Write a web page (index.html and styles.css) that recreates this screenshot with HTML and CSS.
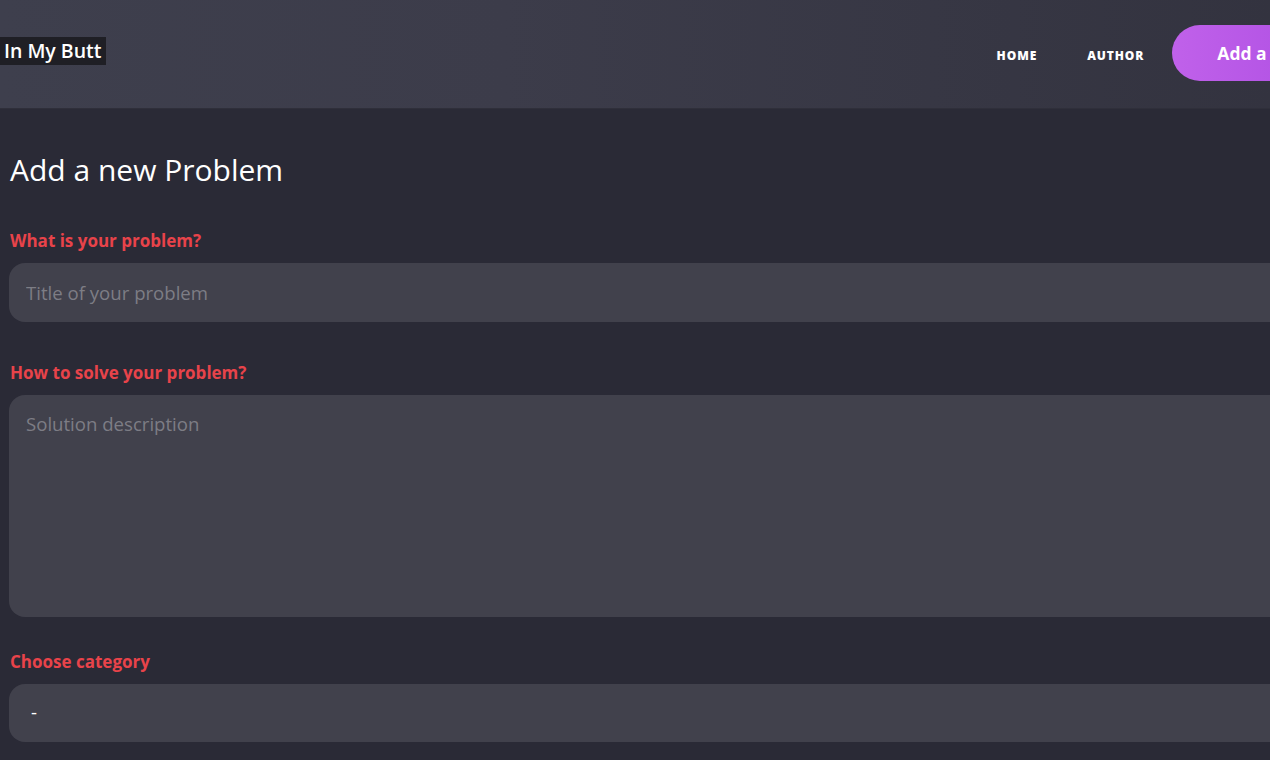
FILE: index.html
```html
<!DOCTYPE html>
<html lang="en">
<head>
<meta charset="utf-8">
<title>In My Butt - Add a new Problem</title>
<link rel="stylesheet" href="styles.css">
</head>
<body>
<div class="site">
  <header class="topbar">
    <a class="logo" href="#">In My Butt</a>
    <nav class="nav">
      <a class="nav-link" href="#">HOME</a>
      <a class="nav-link" href="#">AUTHOR</a>
      <a class="btn-add" href="#">Add a problem</a>
    </nav>
  </header>
  <main class="page">
    <h1 class="title">Add a new Problem</h1>
    <form class="form">
      <div class="field">
        <label class="label" for="title">What is your problem?</label>
        <input class="control" id="title" type="text" placeholder="Title of your problem">
      </div>
      <div class="field field-area">
        <label class="label" for="solution">How to solve your problem?</label>
        <textarea class="control area" id="solution" placeholder="Solution description"></textarea>
      </div>
      <div class="field">
        <label class="label" for="category">Choose category</label>
        <div class="control select" id="category">-</div>
      </div>
    </form>
  </main>
</div>
</body>
</html>
```
FILE: styles.css
```css
html, body {
  margin: 0;
  padding: 0;
  background: #2a2a36;
  overflow: hidden;
}
body {
  font-family: "Open Sans", "Lato", "Liberation Sans", sans-serif;
  color: #ffffff;
}
.site {
  width: 1440px;
}
.topbar {
  height: 108px;
  display: flex;
  align-items: center;
  justify-content: space-between;
  background: linear-gradient(90deg, #3e3f4d 0%, #3c3c4a 35%, #31313d 100%);
  border-bottom: 1px solid #2f2f3a;
  padding-right: 50px;
}
.logo {
  display: block;
  background: #1f1f25;
  color: #ffffff;
  text-decoration: none;
  font-weight: 600;
  font-size: 19.5px;
  line-height: 28px;
  padding: 0 4px 0 4px;
  margin-top: -6px;
}
.nav {
  display: flex;
  align-items: center;
  gap: 50px;
}
.nav-link {
  color: #ffffff;
  text-decoration: none;
  font-weight: 800;
  font-size: 12px;
  letter-spacing: 0.9px;
  margin-top: 2px;
}
.btn-add {
  display: block;
  height: 56px;
  line-height: 56px;
  padding: 0 45px;
  margin-left: -22px;
  border-radius: 28px;
  background: linear-gradient(90deg, #c061ea 0%, #a848e0 100%);
  color: #ffffff;
  text-decoration: none;
  font-weight: 700;
  font-size: 17.5px;
  margin-top: -3px;
}
.page {
  padding: 40px 0 0 9px;
}
.title {
  margin: 0 0 0 1px;
  font-size: 30px;
  line-height: 42px;
  font-weight: 500;
}
.form {
  margin-top: 39px;
}
.field {
  display: flex;
  flex-direction: column;
  margin-bottom: 40px;
}
.field-area {
  margin-bottom: 34px;
}
.label {
  color: #e8434a;
  font-weight: 700;
  font-size: 17px;
  line-height: 22px;
  margin: 0 0 11px 1px;
}
.control {
  box-sizing: border-box;
  display: block;
  width: 100%;
  height: 59px;
  border: none;
  outline: none;
  border-radius: 16px;
  background: #41414c;
  color: #ffffff;
  font-family: inherit;
  font-size: 18.6px;
  padding: 0 17px;
  margin: 0;
}
.control::placeholder {
  color: #7d7d85;
}
.area {
  height: 222px;
  padding-top: 16px;
  resize: none;
}
.select {
  height: 58px;
  line-height: 56px;
  padding-left: 22px;
}
```
